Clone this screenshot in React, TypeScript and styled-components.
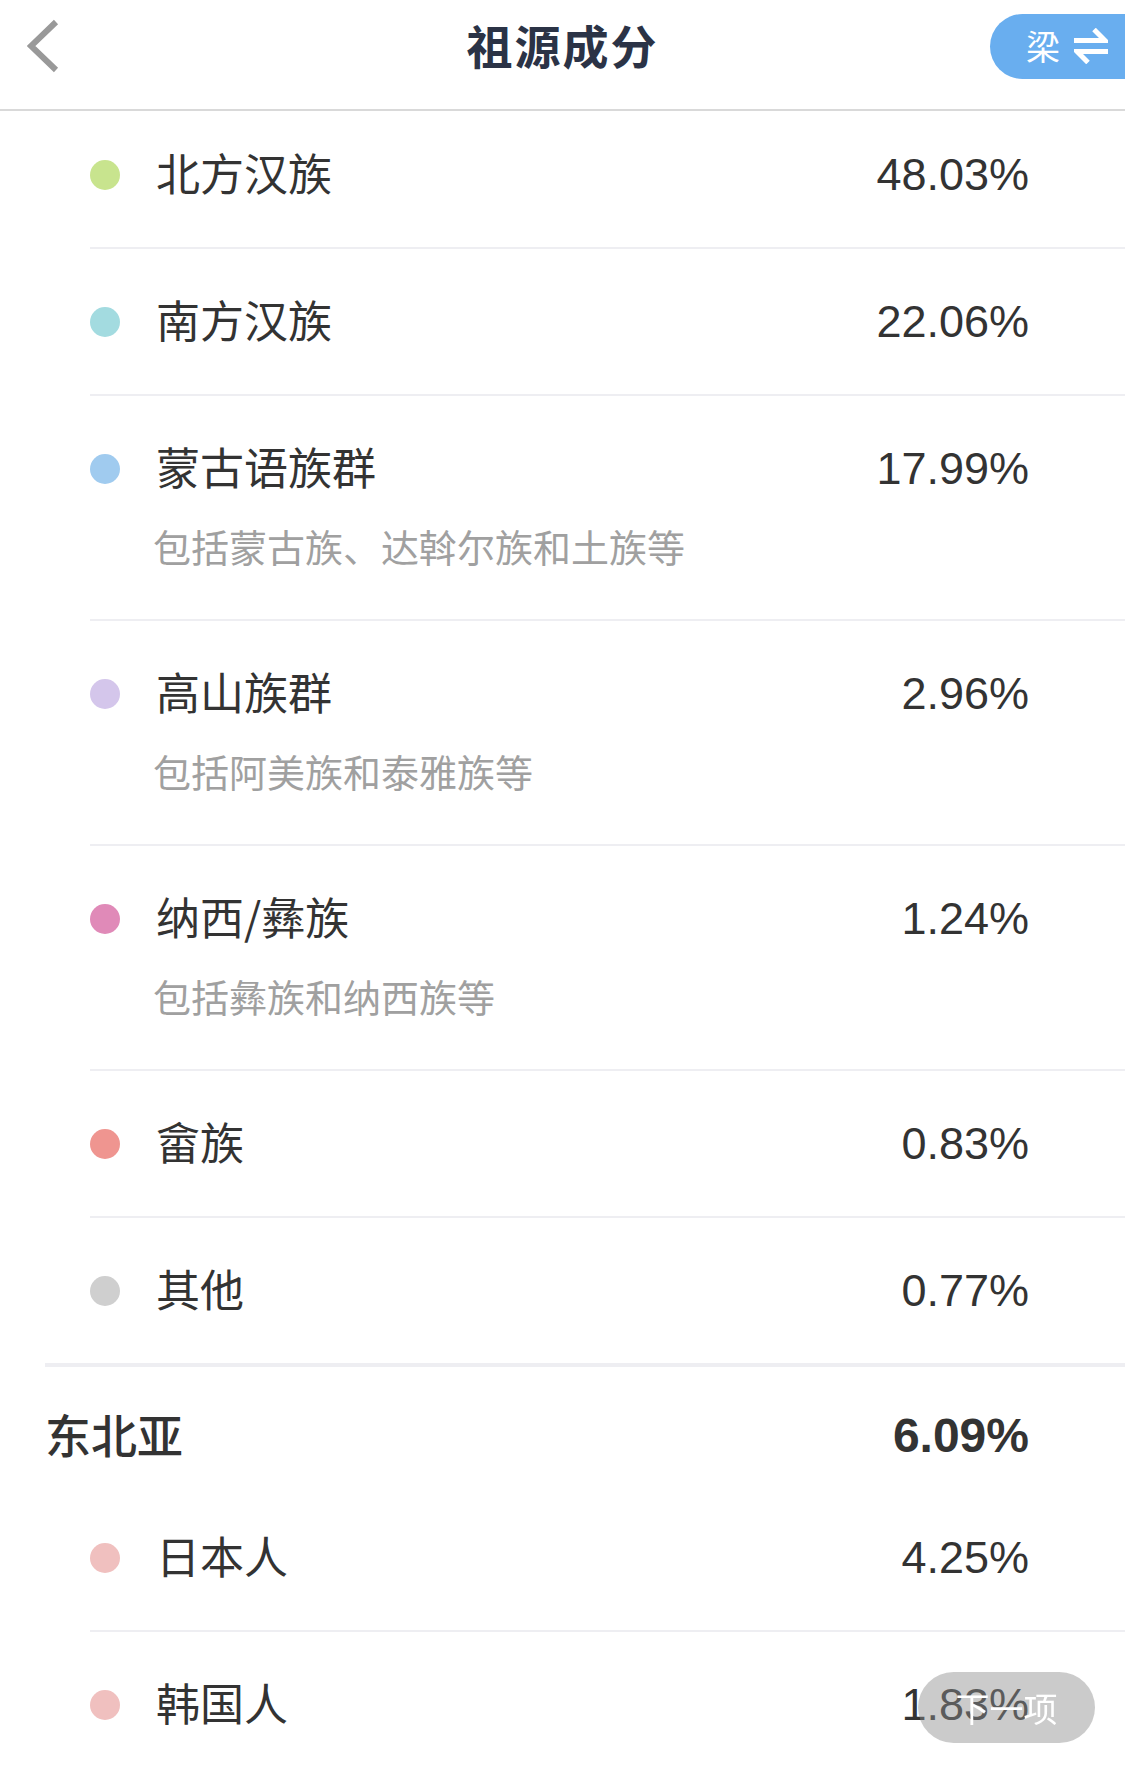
import styled, { createGlobalStyle } from "styled-components";

const GlobalStyle = createGlobalStyle`
  html, body {
    margin: 0;
    padding: 0;
    background: #ffffff;
    overflow: hidden;
  }
  body {
    font-family: "Liberation Sans", "Noto Sans CJK SC", sans-serif;
    color: #333333;
  }
`;

type Item = {
  name: string;
  value: string;
  color: string;
  note?: string;
};

const china: Item[] = [
  { name: "北方汉族", value: "48.03%", color: "#c8e48e" },
  { name: "南方汉族", value: "22.06%", color: "#a3dbe0" },
  { name: "蒙古语族群", value: "17.99%", color: "#a0cbef", note: "包括蒙古族、达斡尔族和土族等" },
  { name: "高山族群", value: "2.96%", color: "#d4c6eb", note: "包括阿美族和泰雅族等" },
  { name: "纳西/彝族", value: "1.24%", color: "#e08ab8", note: "包括彝族和纳西族等" },
  { name: "畲族", value: "0.83%", color: "#ef9590" },
  { name: "其他", value: "0.77%", color: "#cfcfcf" },
];

const northeastAsia: Item[] = [
  { name: "日本人", value: "4.25%", color: "#f0c0bf" },
  { name: "韩国人", value: "1.83%", color: "#f0c0bf" },
];

const App = () => {
  return (
    <Page>
      <GlobalStyle />
      <Header>
        <Back>
          <svg width="32" height="54" viewBox="0 0 32 54">
            <path d="M29 3 L4 27 L29 51" fill="none" stroke="#999999" strokeWidth="6" />
          </svg>
        </Back>
        <Title>祖源成分</Title>
        <Switcher>
          <span>梁</span>
          <svg width="34" height="36" viewBox="0 0 34 36">
            <path d="M0 12.5 H31 L20 1.5" fill="none" stroke="#fff" strokeWidth="5" />
            <path d="M34 23.5 H3 L14 34.5" fill="none" stroke="#fff" strokeWidth="5" />
          </svg>
        </Switcher>
      </Header>

      <Group>
        {china.map((item, i) => (
          <Row key={item.name} $first={i === 0}>
            <Line>
              <Dot $color={item.color} />
              <Name>{item.name}</Name>
              <Value>{item.value}</Value>
            </Line>
            {item.note && <Note>{item.note}</Note>}
          </Row>
        ))}
      </Group>

      <Group>
        <GroupHead>
          <span>东北亚</span>
          <strong>6.09%</strong>
        </GroupHead>
        {northeastAsia.map((item) => (
          <Row key={item.name}>
            <Line>
              <Dot $color={item.color} />
              <Name>{item.name}</Name>
              <Value>{item.value}</Value>
            </Line>
          </Row>
        ))}
      </Group>

      <NextButton>下一项</NextButton>
    </Page>
  );
};

const Page = styled.div`
  width: 1125px;
  height: 1774px;
  overflow: hidden;
  background: #ffffff;
`;

const Header = styled.div`
  height: 92px;
  padding-bottom: 17px;
  border-bottom: 2px solid #d9d9d9;
  display: grid;
  grid-template-columns: 1fr auto 1fr;
  align-items: center;
`;

const Back = styled.div`
  padding-left: 27px;
  display: flex;
  align-items: center;
`;

const Title = styled.h1`
  margin: -4px 0 0;
  font-family: "Noto Sans CJK SC", sans-serif;
  font-size: 46px;
  font-weight: 700;
  color: #2b3346;
  letter-spacing: 2px;
`;

const Switcher = styled.div`
  justify-self: end;
  width: 135px;
  height: 65px;
  box-sizing: border-box;
  padding-left: 36px;
  display: flex;
  align-items: center;
  gap: 14px;
  background: #69aeef;
  border-radius: 33px 0 0 33px;
  color: #ffffff;
  font-family: "Noto Sans CJK SC", sans-serif;
  font-size: 34px;
  line-height: 1;
`;

const Group = styled.div`
  margin-left: 45px;
  border-bottom: 2px solid #eeeef2;
`;

const Row = styled.div<{ $first?: boolean }>`
  margin-left: 45px;
  padding: ${({ $first }) => ($first ? "34px" : "43px")} 96px 42px 0;
  border-bottom: 2px solid #eeeef2;
  &:last-child {
    border-bottom: none;
  }
`;

const Line = styled.div`
  height: 60px;
  display: flex;
  align-items: center;
`;

const Dot = styled.span<{ $color: string }>`
  width: 30px;
  height: 30px;
  border-radius: 50%;
  background: ${({ $color }) => $color};
  flex: none;
`;

const Name = styled.span`
  margin: -6px 0 0 36px;
  font-family: "Noto Sans CJK SC", sans-serif;
  font-size: 44px;
  color: #333333;
  flex: 1;
`;

const Value = styled.span`
  font-family: "Liberation Sans", sans-serif;
  font-size: 45px;
  color: #333333;
`;

const Note = styled.div`
  margin-top: 22px;
  margin-bottom: 6px;
  padding-left: 63px;
  height: 50px;
  line-height: 50px;
  font-family: "Noto Sans CJK SC", sans-serif;
  font-size: 38px;
  color: #a0a0a0;
`;

const GroupHead = styled.div`
  height: 60px;
  padding: 38px 96px 20px 0;
  border-top: 2px solid #eeeef2;
  display: flex;
  align-items: center;
  justify-content: space-between;
  color: #333333;
  span {
    margin-top: -4px;
    font-family: "Noto Sans CJK SC", sans-serif;
    font-size: 46px;
    font-weight: 500;
  }
  strong {
    font-family: "Liberation Sans", sans-serif;
    font-size: 48px;
    font-weight: 700;
  }
`;

const NextButton = styled.div`
  position: fixed;
  right: 30px;
  bottom: 31px;
  width: 177px;
  height: 71px;
  border-radius: 36px;
  background: rgba(140, 140, 140, 0.45);
  color: #ffffff;
  font-family: "Noto Sans CJK SC", sans-serif;
  font-size: 34px;
  display: flex;
  align-items: center;
  justify-content: center;
`;

export default App;
